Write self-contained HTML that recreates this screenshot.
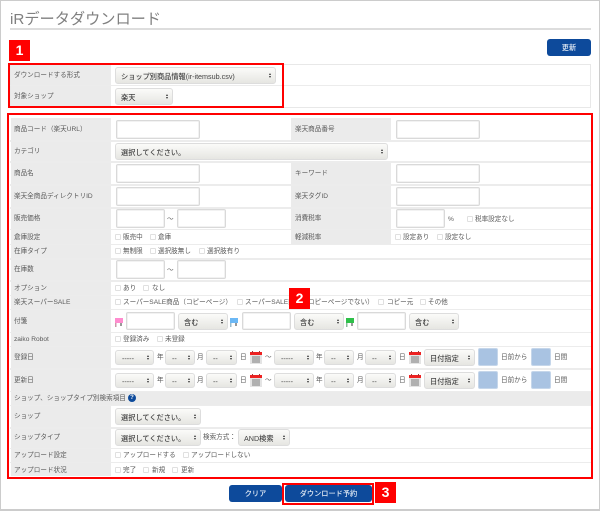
<!DOCTYPE html>
<html lang="ja"><head><meta charset="utf-8">
<style>
html,body{margin:0;padding:0;background:#fff}
#p{position:relative;width:600px;height:511px;overflow:hidden;background:#fff;font-family:"Liberation Sans","Noto Sans CJK JP",sans-serif;font-size:6.6px;color:#5a5a5a}
#p div,#p span,#p i,#p b{position:absolute;display:block;box-sizing:border-box;font-style:normal}
.t{white-space:nowrap;line-height:10px;height:10px;transform:translateY(1px)}
.l{background:#ebebeb;left:11px;width:100px}
.m{background:#ebebeb;left:291px;width:100px}
.h{background:#ececec;height:2px;left:10px;width:581px}
.in{background:#fff;border:1px solid #d9d9d9;border-radius:2px;box-shadow:inset 0 0 0 .5px #e6e6e6}
.s{background:linear-gradient(#fbfbf9,#e6e6e2);border:1px solid #ddd;border-radius:3px;color:#444;font-size:7.2px;white-space:nowrap;padding:1px 0 0 5px;font-weight:500}
.s:before,.s:after{content:"";position:absolute;right:4px;width:0;height:0;border-left:1.5px solid transparent;border-right:1.5px solid transparent}
.s:before{top:50%;margin-top:-3px;border-bottom:2.5px solid #333}
.s:after{top:50%;margin-top:.5px;border-top:2.5px solid #333}
.c{width:6px;height:6px;border:1px solid #e0e0e0;border-radius:1px;background:#fff}
.r{background:#f00;color:#fff;font-weight:bold;font-size:14px;text-align:center;width:21px;height:21px;line-height:21px}
.b{background:#0d4a9b;color:#e4ecf5;border-radius:3px;text-align:center;font-size:7.2px;font-weight:500}
.x{border:2px solid #f00}
.u{background:#a9c3e2;border:1px solid #c5d6ea;border-radius:2px}
</style></head><body><div id="p">
<div style="left:0;top:0;width:600px;height:511px;border:1px solid #ccc;border-bottom-width:2px"></div>
<div class="t" style="left:10px;top:10px;height:17px;line-height:17px;font-size:15.2px;color:#808080">iRデータダウンロード</div>
<div style="left:10px;top:28px;width:581px;height:2px;background:#ddd"></div>
<div class="r" style="left:9px;top:40px">1</div>
<div class="b" style="left:547px;top:39px;width:44px;height:17px;line-height:17px">更新</div>

<!-- table 1 -->
<div style="left:10px;top:64px;width:581px;height:44px;border:1px solid #e8e8e8"></div>
<div class="l" style="top:65px;height:42px"></div>
<div class="h" style="top:85px;height:1px"></div>
<div class="t" style="left:14px;top:70px">ダウンロードする形式</div>
<div class="t" style="left:14px;top:91px">対象ショップ</div>
<div class="s" style="left:115px;top:67px;width:161px;height:17px;line-height:15px">ショップ別商品情報(ir-itemsub.csv)</div>
<div class="s" style="left:115px;top:88px;width:58px;height:17px;line-height:15px">楽天</div>
<div class="x" style="left:8px;top:63px;width:276px;height:45px"></div>

<!-- table 2 backgrounds -->
<div class="l" style="top:118px;height:358px"></div>
<div class="m" style="top:118px;height:22px"></div>
<div class="m" style="top:163px;height:81px"></div>
<div style="left:11px;top:391px;width:580px;height:14px;background:#ebebeb"></div>
<div class="h" style="top:140px"></div><div class="h" style="top:161px"></div><div class="h" style="top:184px"></div><div class="h" style="top:207px"></div><div class="h" style="top:229px;height:1px"></div><div class="h" style="top:244px;height:1px"></div><div class="h" style="top:258px"></div><div class="h" style="top:280px"></div><div class="h" style="top:295px;height:1px"></div><div class="h" style="top:309px;height:1px"></div><div class="h" style="top:332px;height:1px"></div><div class="h" style="top:346px;height:1px"></div><div class="h" style="top:368px"></div><div class="h" style="top:391px;height:1px"></div><div class="h" style="top:405px;height:1px"></div><div class="h" style="top:427px"></div><div class="h" style="top:448px;height:1px"></div><div class="h" style="top:462px;height:1px"></div>

<!-- labels -->
<div class="t" style="left:14px;top:124px">商品コード（楽天URL）</div>
<div class="t" style="left:295px;top:124px">楽天商品番号</div>
<div class="t" style="left:14px;top:146px">カテゴリ</div>
<div class="t" style="left:14px;top:168px">商品名</div>
<div class="t" style="left:295px;top:168px">キーワード</div>
<div class="t" style="left:14px;top:191px">楽天全商品ディレクトリID</div>
<div class="t" style="left:295px;top:191px">楽天タグID</div>
<div class="t" style="left:14px;top:213px">販売価格</div>
<div class="t" style="left:295px;top:213px">消費税率</div>
<div class="t" style="left:14px;top:232px">倉庫設定</div>
<div class="t" style="left:295px;top:232px">軽減税率</div>
<div class="t" style="left:14px;top:246px">在庫タイプ</div>
<div class="t" style="left:14px;top:264px">在庫数</div>
<div class="t" style="left:14px;top:283px">オプション</div>
<div class="t" style="left:14px;top:297px">楽天スーパーSALE</div>
<div class="t" style="left:14px;top:316px">付箋</div>
<div class="t" style="left:14px;top:334px">zaiko Robot</div>
<div class="t" style="left:14px;top:352px">登録日</div>
<div class="t" style="left:14px;top:375px">更新日</div>
<div class="t" style="left:14px;top:393px">ショップ、ショップタイプ別検索項目</div>
<div style="left:128px;top:394px;width:8px;height:8px;border-radius:50%;background:#0d4a9b;color:#fff;font-size:6px;line-height:8px;text-align:center;font-weight:bold">?</div>
<div class="t" style="left:14px;top:411px">ショップ</div>
<div class="t" style="left:14px;top:432px">ショップタイプ</div>
<div class="t" style="left:14px;top:450px">アップロード設定</div>
<div class="t" style="left:14px;top:465px">アップロード状況</div>

<!-- inputs -->
<div class="in" style="left:116px;top:120px;width:84px;height:19px"></div>
<div class="in" style="left:396px;top:120px;width:84px;height:19px"></div>
<div class="s" style="left:115px;top:143px;width:273px;height:17px;line-height:15px">選択してください。</div>
<div class="in" style="left:116px;top:164px;width:84px;height:19px"></div>
<div class="in" style="left:396px;top:164px;width:84px;height:19px"></div>
<div class="in" style="left:116px;top:187px;width:84px;height:19px"></div>
<div class="in" style="left:396px;top:187px;width:84px;height:19px"></div>
<div class="in" style="left:116px;top:209px;width:49px;height:19px"></div>
<div class="t" style="left:167px;top:214px">～</div>
<div class="in" style="left:177px;top:209px;width:49px;height:19px"></div>
<div class="in" style="left:396px;top:209px;width:49px;height:19px"></div>
<div class="t" style="left:448px;top:214px">%</div>
<div class="c" style="left:467px;top:216px"></div><div class="t" style="left:475px;top:214px">税率設定なし</div>

<div class="c" style="left:115px;top:234px"></div><div class="t" style="left:123px;top:232px">販売中</div>
<div class="c" style="left:150px;top:234px"></div><div class="t" style="left:158px;top:232px">倉庫</div>
<div class="c" style="left:395px;top:234px"></div><div class="t" style="left:403px;top:232px">設定あり</div>
<div class="c" style="left:437px;top:234px"></div><div class="t" style="left:445px;top:232px">設定なし</div>

<div class="c" style="left:115px;top:248px"></div><div class="t" style="left:123px;top:246px">無制限</div>
<div class="c" style="left:150px;top:248px"></div><div class="t" style="left:158px;top:246px">選択肢無し</div>
<div class="c" style="left:199px;top:248px"></div><div class="t" style="left:207px;top:246px">選択肢有り</div>

<div class="in" style="left:116px;top:260px;width:49px;height:19px"></div>
<div class="t" style="left:167px;top:265px">～</div>
<div class="in" style="left:177px;top:260px;width:49px;height:19px"></div>

<div class="c" style="left:115px;top:285px"></div><div class="t" style="left:123px;top:283px">あり</div>
<div class="c" style="left:143px;top:285px"></div><div class="t" style="left:152px;top:283px">なし</div>

<div class="c" style="left:115px;top:299px"></div><div class="t" style="left:123px;top:297px">スーパーSALE商品（コピーページ）</div>
<div class="c" style="left:237px;top:299px"></div><div class="t" style="left:245px;top:297px">スーパーSALE商品（コピーページでない）</div>
<div class="c" style="left:378px;top:299px"></div><div class="t" style="left:387px;top:297px">コピー元</div>
<div class="c" style="left:420px;top:299px"></div><div class="t" style="left:428px;top:297px">その他</div>
<div class="r" style="left:289px;top:288px">2</div>

<!-- tags -->
<svg style="position:absolute;left:115px;top:318px" width="8" height="9"><rect width="8" height="5" fill="#ff8ccf"/><rect y="5" width="1.5" height="4" fill="#c9a"/><rect x="5" y="5" width="2" height="3" fill="#999"/></svg>
<div class="in" style="left:126px;top:312px;width:49px;height:18px"></div>
<div class="s" style="left:178px;top:313px;width:50px;height:17px;line-height:15px">含む</div>
<svg style="position:absolute;left:230px;top:318px" width="8" height="9"><rect width="8" height="5" fill="#6cb8f5"/><rect y="5" width="1.5" height="4" fill="#9bc"/><rect x="5" y="5" width="2" height="3" fill="#999"/></svg>
<div class="in" style="left:242px;top:312px;width:49px;height:18px"></div>
<div class="s" style="left:294px;top:313px;width:50px;height:17px;line-height:15px">含む</div>
<svg style="position:absolute;left:346px;top:318px" width="8" height="9"><rect width="8" height="5" fill="#2fc04a"/><rect y="5" width="1.5" height="4" fill="#8b9"/><rect x="5" y="5" width="2" height="3" fill="#999"/></svg>
<div class="in" style="left:357px;top:312px;width:49px;height:18px"></div>
<div class="s" style="left:409px;top:313px;width:50px;height:17px;line-height:15px">含む</div>

<div class="c" style="left:115px;top:336px"></div><div class="t" style="left:123px;top:334px">登録済み</div>
<div class="c" style="left:157px;top:336px"></div><div class="t" style="left:165px;top:334px">未登録</div>

<!-- date row 1 -->
<div class="s" style="left:115px;top:350px;width:39px;height:15px;line-height:13px;padding-left:6px">-----</div><div class="t" style="left:157px;top:352px">年</div>
<div class="s" style="left:165px;top:350px;width:30px;height:15px;line-height:13px;padding-left:6px">--</div><div class="t" style="left:197px;top:352px">月</div>
<div class="s" style="left:206px;top:350px;width:31px;height:15px;line-height:13px;padding-left:6px">--</div><div class="t" style="left:240px;top:352px">日</div>
<svg style="position:absolute;left:250px;top:351px" width="12" height="13"><rect y="1" width="12" height="12" fill="#e4e4e4"/><rect x="2" y="5" width="8" height="7" fill="#b0b0b0"/><rect y="1" width="12" height="3" fill="#e22"/><rect x="2" y="0" width="1" height="2" fill="#a33"/><rect x="9" y="0" width="1" height="2" fill="#a33"/></svg>
<div class="t" style="left:265px;top:352px">～</div>
<div class="s" style="left:274px;top:350px;width:40px;height:15px;line-height:13px;padding-left:6px">-----</div><div class="t" style="left:316px;top:352px">年</div>
<div class="s" style="left:324px;top:350px;width:30px;height:15px;line-height:13px;padding-left:6px">--</div><div class="t" style="left:357px;top:352px">月</div>
<div class="s" style="left:365px;top:350px;width:31px;height:15px;line-height:13px;padding-left:6px">--</div><div class="t" style="left:399px;top:352px">日</div>
<svg style="position:absolute;left:409px;top:351px" width="12" height="13"><rect y="1" width="12" height="12" fill="#e4e4e4"/><rect x="2" y="5" width="8" height="7" fill="#b0b0b0"/><rect y="1" width="12" height="3" fill="#e22"/><rect x="2" y="0" width="1" height="2" fill="#a33"/><rect x="9" y="0" width="1" height="2" fill="#a33"/></svg>
<div class="s" style="left:424px;top:349px;width:51px;height:17px;line-height:15px">日付指定</div>
<div class="u" style="left:478px;top:348px;width:20px;height:18px"></div><div class="t" style="left:501px;top:352px">日前から</div>
<div class="u" style="left:531px;top:348px;width:20px;height:18px"></div><div class="t" style="left:554px;top:352px">日間</div>

<!-- date row 2 -->
<div class="s" style="left:115px;top:373px;width:39px;height:15px;line-height:13px;padding-left:6px">-----</div><div class="t" style="left:157px;top:375px">年</div>
<div class="s" style="left:165px;top:373px;width:30px;height:15px;line-height:13px;padding-left:6px">--</div><div class="t" style="left:197px;top:375px">月</div>
<div class="s" style="left:206px;top:373px;width:31px;height:15px;line-height:13px;padding-left:6px">--</div><div class="t" style="left:240px;top:375px">日</div>
<svg style="position:absolute;left:250px;top:374px" width="12" height="13"><rect y="1" width="12" height="12" fill="#e4e4e4"/><rect x="2" y="5" width="8" height="7" fill="#b0b0b0"/><rect y="1" width="12" height="3" fill="#e22"/><rect x="2" y="0" width="1" height="2" fill="#a33"/><rect x="9" y="0" width="1" height="2" fill="#a33"/></svg>
<div class="t" style="left:265px;top:375px">～</div>
<div class="s" style="left:274px;top:373px;width:40px;height:15px;line-height:13px;padding-left:6px">-----</div><div class="t" style="left:316px;top:375px">年</div>
<div class="s" style="left:324px;top:373px;width:30px;height:15px;line-height:13px;padding-left:6px">--</div><div class="t" style="left:357px;top:375px">月</div>
<div class="s" style="left:365px;top:373px;width:31px;height:15px;line-height:13px;padding-left:6px">--</div><div class="t" style="left:399px;top:375px">日</div>
<svg style="position:absolute;left:409px;top:374px" width="12" height="13"><rect y="1" width="12" height="12" fill="#e4e4e4"/><rect x="2" y="5" width="8" height="7" fill="#b0b0b0"/><rect y="1" width="12" height="3" fill="#e22"/><rect x="2" y="0" width="1" height="2" fill="#a33"/><rect x="9" y="0" width="1" height="2" fill="#a33"/></svg>
<div class="s" style="left:424px;top:372px;width:51px;height:17px;line-height:15px">日付指定</div>
<div class="u" style="left:478px;top:371px;width:20px;height:18px"></div><div class="t" style="left:501px;top:375px">日前から</div>
<div class="u" style="left:531px;top:371px;width:20px;height:18px"></div><div class="t" style="left:554px;top:375px">日間</div>

<div class="s" style="left:115px;top:408px;width:86px;height:17px;line-height:15px">選択してください。</div>
<div class="s" style="left:115px;top:429px;width:86px;height:17px;line-height:15px">選択してください。</div>
<div class="t" style="left:203px;top:432px">検索方式：</div>
<div class="s" style="left:238px;top:429px;width:52px;height:17px;line-height:15px">AND検索</div>

<div class="c" style="left:115px;top:452px"></div><div class="t" style="left:123px;top:450px">アップロードする</div>
<div class="c" style="left:183px;top:452px"></div><div class="t" style="left:191px;top:450px">アップロードしない</div>
<div class="c" style="left:115px;top:467px"></div><div class="t" style="left:123px;top:465px">完了</div>
<div class="c" style="left:143px;top:467px"></div><div class="t" style="left:152px;top:465px">新規</div>
<div class="c" style="left:172px;top:467px"></div><div class="t" style="left:181px;top:465px">更新</div>

<div class="x" style="left:7px;top:113px;width:586px;height:366px"></div>
<div class="b" style="left:229px;top:485px;width:53px;height:17px;line-height:17px">クリア</div>
<div class="b" style="left:285px;top:485px;width:87px;height:17px;line-height:17px">ダウンロード予約</div>
<div class="x" style="left:282px;top:483px;width:92px;height:22px"></div>
<div class="r" style="left:375px;top:482px">3</div>
</div></body></html>
